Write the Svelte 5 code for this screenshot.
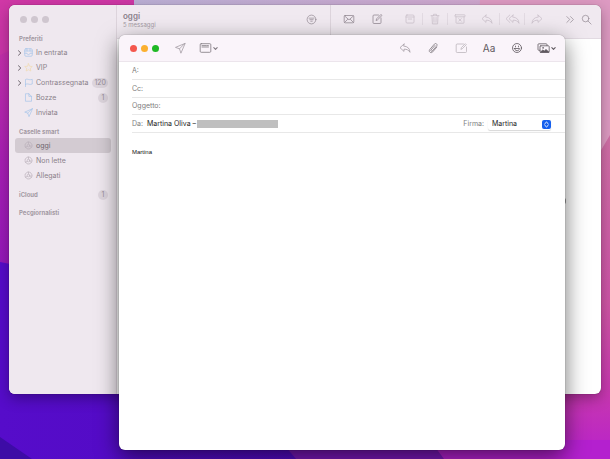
<script>
  let to = $state('');
  let cc = $state('');
  let subject = $state('');
  let message = $state('Martina');
  let signature = $state('Martina');

  const favourites = [
    { label: 'In entrata', icon: 'inbox', nested: true },
    { label: 'VIP', icon: 'star', nested: true },
    { label: 'Contrassegnata', icon: 'flag', nested: true, count: 120 },
    { label: 'Bozze', icon: 'draft', count: 1 },
    { label: 'Inviata', icon: 'plane' }
  ];
  const smart = [
    { label: 'oggi', icon: 'gear', selected: true },
    { label: 'Non lette', icon: 'gear' },
    { label: 'Allegati', icon: 'gear' }
  ];
  const basics = [
    { label: 'Ricevi posta', icon: 'mail' },
    { label: 'Nuovo messaggio', icon: 'compose' }
  ];
  const filing = [
    { label: 'Archivia', icon: 'box' },
    { label: 'Elimina', icon: 'trash' },
    { label: 'Indesiderata', icon: 'junk' }
  ];
  const replies = [
    { label: 'Rispondi', icon: 'reply' },
    { label: 'Rispondi a tutti', icon: 'replyAll' },
    { label: 'Inoltra', icon: 'forward' }
  ];
</script>

{#snippet icon(name)}
  {#if name === 'inbox'}
    <svg class="blue" viewBox="0 0 12 12" width="9" height="9"><rect x="1" y="1" width="10" height="10" rx="1.5" /><path d="M1 4h10M1 7h3c0 2.4 4 2.4 4 0h3M4 1v3M8 1v3" /></svg>
  {:else if name === 'star'}
    <svg class="gold" viewBox="0 0 12 12" width="9" height="9"><path d="M6 1l1.5 3.3 3.5.4-2.6 2.4.7 3.6L6 8.9l-3.1 1.8.7-3.6L1 4.7l3.5-.4z" /></svg>
  {:else if name === 'flag'}
    <svg class="blue" viewBox="0 0 12 12" width="9" height="9"><path d="M2 11.5V2c2-1 3.500 0 5 .2 1.400.2 2.500 0 4-.4v6.200c-1.500.5-2.600.6-4 .4C5.500 8 4 7.500 2 8.400" /></svg>
  {:else if name === 'draft'}
    <svg class="blue" viewBox="0 0 12 12" width="9" height="9"><path d="M2.500 1h4L10 4.500V11H2.500zM6.500 1v3.500H10" /></svg>
  {:else if name === 'plane'}
    <svg class="blue" viewBox="0 0 12 12" width="9" height="9"><path d="M11 1L1 5.500l4 1.200L6.500 11zM11 1L5 6.700" /></svg>
  {:else if name === 'gear'}
    <svg class="gear" viewBox="0 0 12 12" width="9" height="9"><circle cx="6" cy="6" r="4.600" stroke-dasharray="1.600 .6" /><circle cx="6" cy="6" r="1.800" /><path d="M6 4.200V1.500M7.600 7l2.300 1.300M4.400 7L2.100 8.300" /></svg>
  {:else if name === 'filter'}
    <svg viewBox="0 0 12 12" width="11" height="11"><circle cx="6" cy="6" r="4.800" /><path d="M3.300 4.500h5.400M4.200 6.200h3.600M5.200 7.900h1.600" /></svg>
  {:else if name === 'mail'}
    <svg viewBox="0 0 12 12" width="12" height="12"><rect x="1.200" y="2.500" width="9.600" height="7.300" rx="1" /><path d="M1.600 3l4.400 3.800L10.400 3M1.600 9.400l3-3M10.400 9.400l-3-3" /></svg>
  {:else if name === 'compose'}
    <svg viewBox="0 0 12 12" width="12" height="12"><path d="M7.500 2H3a1 1 0 0 0-1 1v6.500a1 1 0 0 0 1 1h6a1 1 0 0 0 1-1V5M5.200 7.200l.4-1.400L10 1.400l1 1L6.600 6.800z" /></svg>
  {:else if name === 'box'}
    <svg viewBox="0 0 12 12" width="12" height="12"><rect x="2" y="2" width="8" height="8" rx="1" /><path d="M2 4h8M4.300 6h3.400" /></svg>
  {:else if name === 'trash'}
    <svg viewBox="0 0 12 12" width="12" height="12"><path d="M2 2.700h8M4.500 2.700V1.300h3v1.400M3 2.700l.4 8.200h5.200L9 2.700M4.900 4.500l.1 4.700M7.100 4.500L7 9.200" /></svg>
  {:else if name === 'junk'}
    <svg viewBox="0 0 12 12" width="12" height="12"><rect x="1" y="1.800" width="10" height="2" rx=".6" /><path d="M2 3.800V9.500a.7.7 0 0 0 .7.7h6.600a.7.7 0 0 0 .7-.7V3.800M4.700 5.600l2.600 2.600M7.300 5.600L4.700 8.200" /></svg>
  {:else if name === 'reply'}
    <svg viewBox="0 0 12 12" width="12" height="12"><path d="M5 2L1 5.700l4 3.700V7.200c2.800-.1 4.600.7 6 3.100-.2-3.800-2.300-6-6-6.200z" /></svg>
  {:else if name === 'replyAll'}
    <svg viewBox="0 0 15 12" width="15" height="12"><path d="M4.800 2L1 5.700l3.800 3.700M8 2L4 5.700l4 3.700V7.200c2.800-.1 4.600.7 6 3.100-.2-3.800-2.300-6-6-6.200z" /></svg>
  {:else if name === 'forward'}
    <svg viewBox="0 0 12 12" width="12" height="12"><path d="M7 2l4 3.700-4 3.700V7.200c-2.800-.1-4.600.7-6 3.100.2-3.800 2.300-6 6-6.200z" /></svg>
  {:else if name === 'more'}
    <svg viewBox="0 0 12 12" width="11" height="11"><path d="M2 2.800L5.200 6 2 9.200M6 2.800L9.200 6 6 9.200" /></svg>
  {:else if name === 'search'}
    <svg viewBox="0 0 12 12" width="11" height="11"><circle cx="5" cy="5" r="3.600" /><path d="M7.600 7.600l3.400 3.400" /></svg>
  {:else if name === 'send'}
    <svg viewBox="0 0 12 12" width="12" height="12"><path d="M10.800 1.500L1.500 5.400l4 1.400 1.300 4zM10.800 1.500L5.500 6.800" /></svg>
  {:else if name === 'fields'}
    <svg viewBox="0 0 13 12" width="13" height="12"><rect x="1.200" y="1.700" width="10.600" height="8.600" rx="1" /><path d="M3 3.600h1.600M5.400 3.600h1.600M7.800 3.600h1.600M3 5h6.500" /></svg>
  {:else if name === 'clip'}
    <svg viewBox="0 0 12 12" width="12" height="12"><path d="M9.800 5.100L5.700 9.900c-1.700 1.900-4.500-.2-3-2.300l4.700-5.500c1.300-1.500 3.500.2 2.300 1.800L5.300 9c-.8.900-2-.1-1.300-1l3.900-4.500" /></svg>
  {:else if name === 'markup'}
    <svg viewBox="0 0 13 12" width="13" height="12"><path d="M8.500 2H2.200a1 1 0 0 0-1 1v6.500a1 1 0 0 0 1 1h8.300a1 1 0 0 0 1-1V5M6 7l.4-1.400L10.300 1.700l1 1L7.400 6.600z" /></svg>
  {:else if name === 'smile'}
    <svg viewBox="0 0 12 12" width="12" height="12"><circle cx="6" cy="6" r="4.500" /><path d="M3.500 6.500h5c-.2 3-4.800 3-5 0z" /><path d="M4.500 4.100v.8M7.500 4.100v.8" /></svg>
  {:else if name === 'photos'}
    <svg viewBox="0 0 13 12" width="13" height="12"><path d="M3 8.300H1.800a.8.800 0 0 1-.8-.8V2.600a.8.800 0 0 1 .8-.8h7.400a.8.800 0 0 1 .8.800v.9" /><rect x="3" y="3.800" width="9.200" height="6.700" rx=".8" /><path class="solid" d="M3.500 10l2.300-2 1.500 1 1.700-1.500L11.800 10z" /><circle class="solid" cx="6" cy="5.900" r=".3" /></svg>
  {:else if name === 'down'}
    <svg viewBox="0 0 6 6" width="5" height="5"><path d="M1 2l2 2 2-2" stroke-width="1.300" /></svg>
  {/if}
{/snippet}

{#snippet tool(item)}
  <button class="tool" aria-label={item.label}>{@render icon(item.icon)}</button>
{/snippet}

{#snippet mailbox(item)}
  <li>
    <button class="mailbox" class:selected={item.selected}>
      <span class="arrow">
        {#if item.nested}<svg viewBox="0 0 5 6" width="5" height="6"><path d="M1.500.8L3.800 3 1.500 5.200" /></svg>{/if}
      </span>
      <span class="glyph">{@render icon(item.icon)}</span>
      <span class="name">{item.label}</span>
      {#if item.count}<span class="badge">{item.count}</span>{/if}
    </button>
  </li>
{/snippet}

<div class="desktop">
  <svg class="wallpaper" viewBox="0 0 610 459" preserveAspectRatio="none" aria-hidden="true">
    <defs>
      <linearGradient id="left" x1="0" y1="0" x2="0" y2="1"><stop offset="0" stop-color="#d038a6" /><stop offset=".5" stop-color="#a81fb4" /><stop offset="1" stop-color="#8a14bc" /></linearGradient>
      <linearGradient id="top" x1="0" y1="0" x2="1" y2="0"><stop offset="0" stop-color="#bcb0d6" /><stop offset="1" stop-color="#d6a4cc" /></linearGradient>
      <linearGradient id="right" x1="0" y1="0" x2="0" y2="1"><stop offset="0" stop-color="#d070a6" /><stop offset=".65" stop-color="#cc4ca8" /><stop offset="1" stop-color="#b620d0" /></linearGradient>
      <linearGradient id="corner" x1="0" y1="0" x2="0" y2="1"><stop offset="0" stop-color="#cf58a4" /><stop offset=".6" stop-color="#c636b0" /><stop offset="1" stop-color="#b822cc" /></linearGradient>
      <linearGradient id="base" x1="0" y1="0" x2="1" y2="0"><stop offset="0" stop-color="#560cca" /><stop offset="1" stop-color="#4a08b8" /></linearGradient>
    </defs>
    <rect width="610" height="459" fill="url(#base)" />
    <path d="M0 0H300V320L0 262z" fill="url(#left)" />
    <path d="M0 0H130L0 55z" fill="#d038a6" opacity=".5" />
    <path d="M0 437L32 459H0z" fill="#3d0ca6" />
    <path d="M134 0H610V300H300L134 6z" fill="url(#top)" />
    <path d="M480 0H610V170H470z" fill="#dd9ac2" />
    <path d="M610 135L560 220V459H610z" fill="url(#right)" />
    <path d="M500 300H610V459H440L420 420z" fill="url(#corner)" />
    <path d="M280 440H440L455 459H296z" fill="#7818b8" />
    <path d="M430 440H610V459H444z" fill="#b420cf" />
  </svg>

  <main class="window mail">
    <nav class="sidebar" aria-label="Caselle">
      <div class="lights idle"><i></i><i></i><i></i></div>
      <h2>Preferiti</h2>
      <ul>
        {#each favourites as item}{@render mailbox(item)}{/each}
      </ul>
      <h2>Caselle smart</h2>
      <ul>
        {#each smart as item}{@render mailbox(item)}{/each}
      </ul>
      <h2>iCloud <span class="badge">1</span></h2>
      <h2>Pecgiornalisti</h2>
    </nav>
    <section class="content">
      <header class="bar">
        <div class="list-head">
          <div class="title">
            <h1>oggi</h1>
            <p>5 messaggi</p>
          </div>
          {@render tool({ label: 'Filtra', icon: 'filter' })}
        </div>
        <div class="actions">
          <div class="group wide">{#each basics as item}{@render tool(item)}{/each}</div>
          <div class="group split">{#each filing as item}{@render tool(item)}{/each}</div>
          <div class="group split">{#each replies as item}{@render tool(item)}{/each}</div>
          <div class="group end">
            {@render tool({ label: 'Altro', icon: 'more' })}
            {@render tool({ label: 'Cerca', icon: 'search' })}
          </div>
        </div>
      </header>
      <span class="thumb"></span>
    </section>
  </main>

  <form class="window composer" aria-label="Nuovo messaggio" onsubmit={(e) => e.preventDefault()}>
    <header class="compose-bar">
      <div class="lights"><i class="red"></i><i class="amber"></i><i class="green"></i></div>
      <button type="button" class="soft" aria-label="Invia">{@render icon('send')}</button>
      <button type="button" class="mid" aria-label="Campi intestazione">{@render icon('fields')}{@render icon('down')}</button>
      <div class="right">
        <button type="button" class="soft" aria-label="Rispondi">{@render icon('reply')}</button>
        <button type="button" class="mid" aria-label="Allega">{@render icon('clip')}</button>
        <button type="button" class="faint" aria-label="Modifica">{@render icon('markup')}</button>
        <button type="button" class="format">Aa</button>
        <button type="button" aria-label="Emoji">{@render icon('smile')}</button>
        <button type="button" aria-label="Foto">{@render icon('photos')}{@render icon('down')}</button>
      </div>
    </header>
    <div class="fields">
      <div class="field"><label for="to">A:</label><input id="to" bind:value={to} /></div>
      <div class="field"><label for="cc">Cc:</label><input id="cc" bind:value={cc} /></div>
      <div class="field"><label for="subject">Oggetto:</label><input id="subject" bind:value={subject} /></div>
      <div class="field">
        <span class="caption">Da:</span>
        <span class="sender">Martina Oliva –</span>
        <span class="redacted"></span>
        <div class="signature">
          <label for="signature">Firma:</label>
          <div class="picker">
            <select id="signature" bind:value={signature}>
              <option>Martina</option>
            </select>
            <svg viewBox="0 0 9 9" width="9" height="9" aria-hidden="true"><rect width="9" height="9" rx="2" /><path d="M2.800 3.700l1.700-1.600 1.700 1.600M2.800 5.300l1.700 1.600 1.700-1.600" /></svg>
          </div>
        </div>
      </div>
    </div>
    <textarea aria-label="Messaggio" bind:value={message}></textarea>
  </form>
</div>

<style>
  :global(body) {
    margin: 0;
  }

  .desktop {
    position: relative;
    height: 100vh;
    overflow: hidden;
    font: 7px/10px Inter, "Liberation Sans", sans-serif;
    color: #8a818a;
  }

  .wallpaper {
    display: block;
    width: 100%;
    height: 100%;
  }

  h1, h2, p, ul {
    margin: 0;
    padding: 0;
    list-style: none;
  }

  button, input, select, textarea {
    margin: 0;
    padding: 0;
    border: 0;
    outline: 0;
    background: none;
    color: inherit;
    font: inherit;
  }

  svg {
    flex: none;
    fill: none;
    stroke: currentColor;
    stroke-width: 0.8;
    stroke-linecap: round;
    stroke-linejoin: round;
  }

  .wallpaper {
    stroke: none;
  }

  svg .solid {
    fill: currentColor;
  }

  .window {
    position: absolute;
    display: flex;
    overflow: hidden;
    border-radius: 6px;
    background: #fff;
  }

  .mail {
    inset: 5px 9px 65px;
    box-shadow: 0 0 1px rgba(0, 0, 0, 0.6), 0 5px 14px rgba(0, 0, 0, 0.3);
  }

  .composer {
    inset: 35px 45px 9px 119px;
    flex-direction: column;
    box-shadow: 0 0 1px rgba(0, 0, 0, 0.6), 0 7px 22px rgba(0, 0, 0, 0.55);
  }

  .lights {
    display: flex;
    align-items: center;
    gap: 4px;
  }

  .lights i {
    width: 7px;
    height: 7px;
    border-radius: 50%;
    background: #cfc6cf;
  }

  .lights .red { background: #f4574d; }
  .lights .amber { background: #fbb02f; }
  .lights .green { background: #1fb824; }

  .sidebar {
    flex: none;
    width: 107px;
    border-right: 1px solid #ddd4dc;
    background: #efe8ef;
  }

  .idle {
    height: 28px;
    padding-left: 11px;
    box-sizing: border-box;
  }

  h2 {
    display: flex;
    align-items: center;
    justify-content: space-between;
    height: 12px;
    padding: 0 8px 0 10px;
    color: #a399a3;
    font-size: 6px;
    font-weight: 700;
  }

  ul + h2, h2 + h2 {
    margin-top: 6px;
  }

  .mailbox {
    display: flex;
    align-items: center;
    width: calc(100% - 11px);
    height: 15px;
    margin: 0 5px 0 6px;
    padding: 0 3px 0 2px;
    border-radius: 3px;
    text-align: left;
  }

  li {
    display: flex;
  }

  .selected {
    background: #d3cbd2;
    color: #6e656e;
  }

  .arrow, .glyph {
    display: flex;
  }

  .arrow {
    width: 5px;
    color: #484048;
  }

  .glyph {
    margin: 0 3px 0 2px;
  }

  .name {
    flex: 1;
    white-space: nowrap;
  }

  .blue { color: #9bc0ea; }
  .gold { color: #f2d9a4; }
  .gear { color: #b9afb9; }

  .badge {
    min-width: 10px;
    padding: 0 2px;
    box-sizing: border-box;
    border-radius: 5px;
    background: #ddd5dd;
    color: #978d97;
    font-size: 7px;
    font-weight: 400;
    line-height: 10px;
    text-align: center;
  }

  .content {
    position: relative;
    flex: 1;
    min-width: 0;
  }

  .bar {
    display: flex;
    height: 34px;
    background: #f0e9f0;
    box-sizing: border-box;
    border-bottom: 1px solid #e2dae2;
  }

  .list-head {
    display: flex;
    align-items: center;
    justify-content: space-between;
    flex: 0 0 214px;
    box-sizing: border-box;
    padding: 0 7px 5px 6px;
    border-right: 1px solid #ddd4dc;
  }

  h1 {
    padding-top: 1px;
    color: #8a808a;
    font-size: 8px;
    font-weight: 600;
    line-height: 9px;
  }

  p {
    color: #a399a3;
    font-size: 6px;
    line-height: 7px;
  }

  .actions {
    display: flex;
    align-items: center;
    flex: 1;
    padding: 0 7px 5px 4px;
  }

  .group {
    display: flex;
  }

  .tool {
    display: flex;
    align-items: center;
    justify-content: center;
    width: 24px;
    height: 12px;
    color: #968c96;
  }

  .wide {
    margin-right: 7px;
  }

  .wide .tool {
    width: 28px;
  }

  .split {
    margin-right: 3px;
  }

  .split .tool {
    color: #cbc2cb;
  }

  .split .tool:not(:first-child) {
    border-left: 1px solid #e2dae2;
    width: 25px;
  }

  .end {
    margin-left: auto;
  }

  .end .tool {
    width: 16px;
  }

  .thumb {
    position: absolute;
    top: 193px;
    right: 35px;
    width: 4px;
    height: 6px;
    border-radius: 2px;
    background: #9c9c9c;
  }

  .compose-bar {
    display: flex;
    align-items: center;
    height: 27px;
    box-sizing: border-box;
    padding: 0 4px 0 11px;
    border-bottom: 1px solid #ece5ec;
    background: #faf4fa;
  }

  .compose-bar button {
    display: flex;
    align-items: center;
    justify-content: center;
    gap: 1px;
    width: 28px;
    height: 20px;
    color: #5f595f;
  }

  .compose-bar > .soft {
    margin-left: 7px;
  }

  .compose-bar .soft { color: #a39ca3; }
  .compose-bar .mid { color: #7f787f; }
  .compose-bar .faint { color: #bdb6bd; }

  .compose-bar .format {
    font-size: 10px;
  }

  .right {
    display: flex;
    margin-left: auto;
  }

  .right button:last-child {
    width: 30px;
  }

  .fields {
    display: flex;
    flex-direction: column;
    height: 71px;
    padding-left: 13px;
    color: #7d7d7d;
  }

  .field {
    display: flex;
    align-items: center;
    flex: 1;
    padding-top: 1px;
    border-bottom: 1px solid #e8e8e8;
  }

  .field input {
    flex: 1;
    min-width: 0;
    height: 12px;
    padding-left: 4px;
    color: #222;
  }

  .sender {
    margin: 0 1px 0 4px;
    color: #222;
  }

  .redacted {
    width: 81px;
    height: 8px;
    background: #bfbfbf;
  }

  .signature {
    display: flex;
    align-items: center;
    gap: 4px;
    margin: 0 14px 0 auto;
  }

  .picker {
    position: relative;
    display: flex;
    width: 63px;
  }

  select {
    width: 100%;
    height: 11px;
    padding-left: 4px;
    border-radius: 2px;
    box-shadow: 0 1px 1px rgba(0, 0, 0, 0.16);
    appearance: none;
    color: #222;
  }

  .picker svg {
    position: absolute;
    top: 1px;
    right: 0;
    pointer-events: none;
    color: #fff;
    stroke-width: 1;
  }

  .picker rect {
    fill: #1560ee;
    stroke: none;
  }

  textarea {
    flex: 1;
    padding: 14px 13px;
    resize: none;
    color: #111;
    font: 6px/10px "Liberation Sans", Arial, sans-serif;
  }
</style>
